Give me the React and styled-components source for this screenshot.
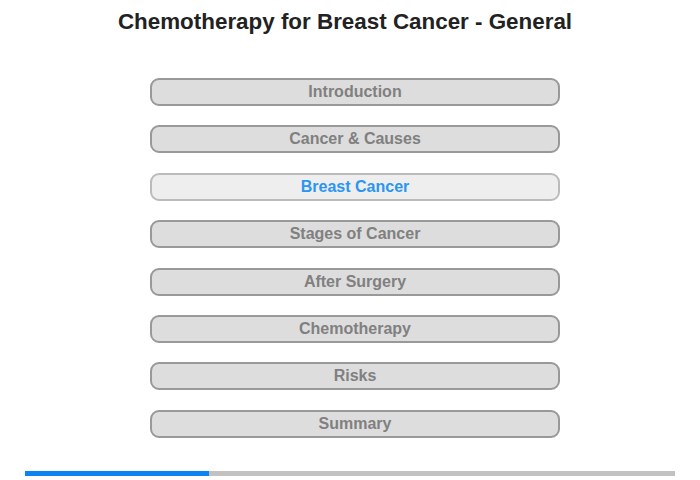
import React from "react";
import styled, { createGlobalStyle } from "styled-components";

const GlobalStyle = createGlobalStyle`
  html, body {
    margin: 0;
    padding: 0;
    background: #ffffff;
    font-family: "Liberation Sans", Arial, sans-serif;
  }
`;

const sections = [
  "Introduction",
  "Cancer & Causes",
  "Breast Cancer",
  "Stages of Cancer",
  "After Surgery",
  "Chemotherapy",
  "Risks",
  "Summary",
];

const App = () => {
  const active = 2;
  const progress = 28.3;
  return (
    <Page>
      <GlobalStyle />
      <Title>Chemotherapy for Breast Cancer - General</Title>
      <Menu>
        {sections.map((name, i) => (
          <MenuButton key={name} active={i === active}>
            {name}
          </MenuButton>
        ))}
      </Menu>
      <Progress>
        <ProgressFill style={{ width: `${progress}%` }} />
      </Progress>
    </Page>
  );
};

const Page = styled.div`
  width: 700px;
  height: 480px;
  display: flex;
  flex-direction: column;
  overflow: hidden;
`;

const Title = styled.h1`
  width: 690px;
  margin: 0;
  padding-top: 9px;
  text-align: center;
  font-size: 22.4px;
  line-height: 26px;
  font-weight: bold;
  color: #222222;
`;

const Menu = styled.div`
  display: flex;
  flex-direction: column;
  gap: 19.4px;
  margin-top: 43px;
  margin-left: 150px;
  width: 410px;
`;

const MenuButton = styled.div`
  box-sizing: border-box;
  height: 28px;
  display: flex;
  align-items: center;
  justify-content: center;
  border: 2px solid ${(props) => (props.active ? "#bbbbbb" : "#999999")};
  border-radius: 9px;
  background: ${(props) => (props.active ? "#eeeeee" : "#dddddd")};
  color: ${(props) => (props.active ? "#2b95f3" : "#808080")};
  font-size: 16px;
  font-weight: bold;
  cursor: pointer;
  user-select: none;
`;

const Progress = styled.div`
  margin: auto 25px 4px 25px;
  height: 5px;
  background: #c2c2c2;
`;

const ProgressFill = styled.div`
  height: 100%;
  background: #0a84f0;
`;

export default App;
